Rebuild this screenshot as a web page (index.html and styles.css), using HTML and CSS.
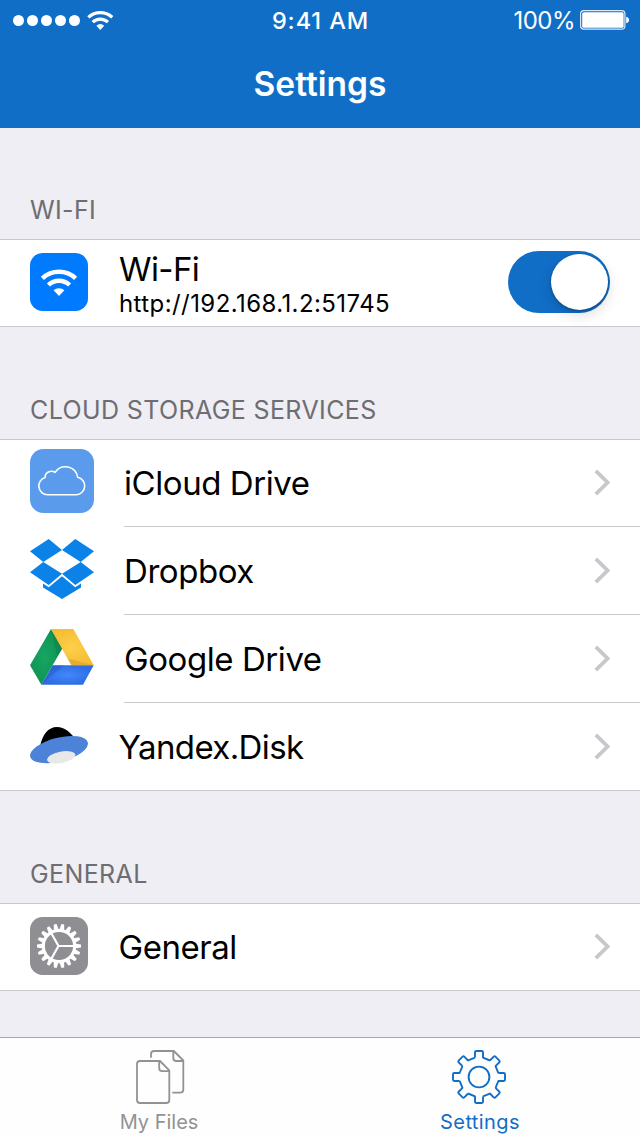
FILE: index.html
```html
<!DOCTYPE html>
<html lang="en">
<head>
<meta charset="utf-8">
<title>Settings</title>
<link rel="stylesheet" href="styles.css">
</head>
<body>
<svg width="0" height="0" class="defs" aria-hidden="true">
  <defs>
    <g id="wifi">
      <path d="M-16.6 -17.6A24.2 24.2 0 0 1 16.6 -17.6M-10.6 -11A15.3 15.3 0 0 1 10.6 -11" fill="none" stroke="#fff" stroke-width="4.5"/>
      <path d="M0 0L-5.4 -5.8A8.2 8.2 0 0 1 5.4 -5.8Z" fill="#fff"/>
    </g>
    <path id="chevron" d="M1.8 1.8L13.6 13.5L1.8 25.2" fill="none" stroke="#c7c7cc" stroke-width="3.8"/>
    <path id="cogside" d="M-4 -19.4V-24.8Q-4 -26 -2.8 -26H2.8Q4 -26 4 -24.8V-19.4L10.9 -16.5"/>
    <path id="tooth" d="M-2.5 -16L-1.4 -22H1.4L2.5 -16Z"/>
    <g id="teeth3"><use href="#tooth"/><use href="#tooth" transform="rotate(20)"/><use href="#tooth" transform="rotate(40)"/></g>
  </defs>
</svg>
<div class="screen">
  <header class="navbar">
    <div class="status">
      <div class="signal">
        <i class="dot"></i><i class="dot"></i><i class="dot"></i><i class="dot"></i><i class="dot"></i>
        <svg class="status-wifi" width="26" height="20" viewBox="0 0 26 20"><use href="#wifi" transform="translate(13.3 19) scale(.72)"/></svg>
      </div>
      <div class="clock">9:41 AM</div>
      <div class="power">
        <span class="percent">100%</span>
        <svg class="battery" width="50" height="20" viewBox="0 0 50 20"><rect x=".6" y=".6" width="44.3" height="18.6" rx="3.2" fill="none" stroke="#fff" stroke-opacity=".85" stroke-width="1.2"/><rect x="2.2" y="2.2" width="41.4" height="15.6" rx="1.6" fill="#fff"/><path d="M46.2 6.7C50 7.5 50 12.5 46.2 13.3Z" fill="#fff"/></svg>
      </div>
    </div>
    <h1 class="title">Settings</h1>
  </header>

  <main class="content">
    <h2 class="heading heading-wifi">WI-FI</h2>
    <section class="group">
      <div class="row">
        <svg class="icon icon-square" width="58" height="58" viewBox="0 0 58 58"><rect width="58" height="58" rx="12.5" fill="#007aff"/><use href="#wifi" transform="translate(29 43)"/></svg>
        <div class="labels">
          <div class="label label-wifi">Wi-Fi</div>
          <div class="address">http://192.168.1.2:51745</div>
        </div>
        <div class="switch"><div class="knob"></div></div>
      </div>
    </section>

    <h2 class="heading heading-cloud">CLOUD STORAGE SERVICES</h2>
    <section class="group">
      <div class="row row-wide">
        <svg class="icon icon-cloud" width="64" height="64" viewBox="0 0 64 64"><rect width="64" height="64" rx="13.5" fill="#5b9bec"/><path d="M17.5 45.8H46.3A8.9 8.9 0 0 0 47.6 28.2A12.3 12.3 0 0 0 25.2 23.3C20.6 20.6 15 23.6 15.1 28.4A8.9 8.9 0 0 0 17.5 45.8Z" fill="none" stroke="#fff" stroke-width="1.6"/></svg>
        <div class="cell"><span class="label">iCloud Drive</span><svg class="chevron chevron-up" width="17" height="27"><use href="#chevron"/></svg></div>
      </div>
      <div class="row row-wide">
        <svg class="icon icon-dropbox" width="64" height="60" viewBox="0 0 64 60" fill="#0a82e8"><path d="M18.7 0L32 11L13.3 23L0 12.3ZM45.3 0L64 12.3L50.7 23L32 11ZM13.3 23L32 34.7L18.7 46L0 33.3ZM50.7 23L64 33.3L45.3 46L32 34.7ZM13 44.5L18.8 48.3L32 37.2L45.2 48.3L51 44.5V48.5L32 60L13 48.5Z"/></svg>
        <div class="cell"><span class="label">Dropbox</span><svg class="chevron" width="17" height="27"><use href="#chevron"/></svg></div>
      </div>
      <div class="row row-wide">
        <svg class="icon icon-google" width="64" height="56" viewBox="0 0 64 56">
          <defs>
            <radialGradient id="green" cx=".45" cy=".5"><stop offset="0" stop-color="#17a562"/><stop offset="1" stop-color="#109454"/></radialGradient>
            <radialGradient id="yellow"><stop offset="0" stop-color="#ffcf4c"/><stop offset="1" stop-color="#f5be35"/></radialGradient>
            <radialGradient id="blue"><stop offset="0" stop-color="#4388fa"/><stop offset="1" stop-color="#2e6de4"/></radialGradient>
          </defs>
          <path d="M21 0L32.3 19.5L11.3 55.7L0 36.3Z" fill="url(#green)"/><path d="M21 0H43.3L63.7 36.3H41.3Z" fill="url(#yellow)"/><path d="M22.7 36.3H63.7L53 55.7H11.3Z" fill="url(#blue)"/>
          <path d="M21 0L32.3 19.5L27 27Z" fill="#0a6d3c" opacity=".25"/><path d="M38 29.5L63.7 36.3H41.3Z" fill="#b9812a" opacity=".3"/><path d="M22.7 36.3H34L11.3 55.7Z" fill="#1b4da8" opacity=".3"/>
        </svg>
        <div class="cell"><span class="label">Google Drive</span><svg class="chevron" width="17" height="27"><use href="#chevron"/></svg></div>
      </div>
      <div class="row row-wide">
        <svg class="icon icon-yandex" width="64" height="38" viewBox="0 0 64 38"><path d="M10.2 18.5C12.5 8 18 0 27 0C35 0 39.5 5.5 44 10Z" fill="#000"/><ellipse cx="29" cy="22.6" rx="29.7" ry="11.9" transform="rotate(-14 29 22.6)" fill="#4c82d8"/><ellipse cx="31.2" cy="30.3" rx="14.4" ry="5.7" transform="rotate(-11 31.2 30.3)" fill="#e8e8e8"/></svg>
        <div class="cell"><span class="label label-yandex">Yandex.Disk</span><svg class="chevron" width="17" height="27"><use href="#chevron"/></svg></div>
      </div>
    </section>

    <h2 class="heading heading-general">GENERAL</h2>
    <section class="group">
      <div class="row">
        <svg class="icon icon-square" width="58" height="58" viewBox="0 0 58 58"><rect width="58" height="58" rx="12.5" fill="#8e8e93"/>
          <g transform="translate(29 29) rotate(90)" fill="#fff"><use href="#teeth3"/><use href="#teeth3" transform="rotate(60)"/><use href="#teeth3" transform="rotate(120)"/><use href="#teeth3" transform="rotate(180)"/><use href="#teeth3" transform="rotate(240)"/><use href="#teeth3" transform="rotate(300)"/></g>
          <g transform="translate(29 29)" fill="none" stroke="#fff"><circle r="15.6" stroke-width="3"/><path d="M-.5 0H15M-.5 0L-7.8 -13M-.5 0L-7.8 13" stroke-width="2.2"/></g></svg>
        <div class="cell"><span class="label label-general">General</span><svg class="chevron chevron-up" width="17" height="27"><use href="#chevron"/></svg></div>
      </div>
    </section>
  </main>

  <nav class="tabbar">
    <div class="tab">
      <svg class="files" width="50" height="56" viewBox="0 0 50 56" fill="none" stroke="#929292" stroke-width="1.8" stroke-linejoin="round"><path d="M25 12H5Q2 12 2 15V51Q2 54 5 54H31.3Q34.3 54 34.3 51V21.3L25 12H24.2V19.3Q24.2 22.2 27.2 22.2H34.3M16 8.7V5Q16 2 19 2H38.8L48.3 11.5V40.5Q48.3 43.6 45.3 43.6H37.3M38.3 2V9Q38.3 12 41.3 12H48.3"/></svg>
      <span class="tab-label">My Files</span>
    </div>
    <div class="tab tab-active">
      <svg width="56" height="56" viewBox="0 0 56 56"><g transform="translate(28 28)" fill="none" stroke="#116ec7" stroke-width="1.9" stroke-linejoin="round"><circle r="10.4"/><use href="#cogside"/><use href="#cogside" transform="rotate(45)"/><use href="#cogside" transform="rotate(90)"/><use href="#cogside" transform="rotate(135)"/><use href="#cogside" transform="rotate(180)"/><use href="#cogside" transform="rotate(225)"/><use href="#cogside" transform="rotate(270)"/><use href="#cogside" transform="rotate(315)"/></g></svg>
      <span class="tab-label tab-settings">Settings</span>
    </div>
  </nav>
</div>
</body>
</html>
```
FILE: styles.css
```css
* { box-sizing: border-box; }
body { margin: 0; font-family: Inter, "Liberation Sans", sans-serif; color: #000; }
.defs { display: block; }
.screen { width: 640px; height: 1136px; display: flex; flex-direction: column; background: #efeef4; overflow: hidden; white-space: nowrap; }
.navbar { height: 128px; background: #116ec7; color: #fff; }
.status { height: 40px; display: grid; grid-template-columns: 1fr auto 1fr; align-items: center; padding: 0 10px 0 13px; }
.signal { display: flex; align-items: center; gap: 3px; margin-bottom: 1px; }
.dot { width: 11px; height: 11px; border-radius: 50%; background: #fff; }
.status-wifi { margin-left: 4px; }
.clock { font-size: 23.5px; font-weight: 500; letter-spacing: 0.9px; line-height: 42px; margin-left: -2px; }
.power { display: flex; align-items: center; justify-content: flex-end; gap: 5px; }
.percent { font-size: 24px; line-height: 42px; letter-spacing: -0.5px; }
.battery { margin-bottom: 2px; }
.title { margin: 0; font-size: 33.5px; line-height: 89px; font-weight: 580; text-align: center; letter-spacing: 0; }

.content { flex: 1; }
.heading { margin: 0; padding: 0 30px 14px; display: flex; align-items: flex-end; font-size: 25px; line-height: 30px; font-weight: 400; color: #6d6d72; letter-spacing: 0.38px; }
.heading-wifi { height: 111px; }
.heading-cloud, .heading-general { height: 112px; }
.group { background: #fff; border-top: 1px solid #c8c7cc; border-bottom: 1px solid #c8c7cc; }
.row { height: 86px; display: flex; align-items: center; padding-left: 30px; }
.row + .row { height: 88px; }
.icon { flex: none; margin-right: 31px; }
.icon-square { margin-top: -2px; }
.row-wide .icon { margin-right: 30px; }
.icon-cloud { margin-top: -4px; }
.icon-dropbox { margin-top: -3px; }
.icon-google { margin-top: -3px; }
.cell { flex: 1; align-self: stretch; display: flex; align-items: center; justify-content: space-between; padding: 0 29px 0 0; }
.row + .row .cell { border-top: 1px solid #c8c7cc; }
.chevron-up { margin-bottom: 2px; }
.label { font-size: 33px; line-height: 40px; letter-spacing: -0.43px; }
.label-wifi { line-height: 38px; letter-spacing: -0.6px; }
.label-yandex { margin-left: -5.5px; letter-spacing: -0.6px; }
.label-general { margin-left: -0.5px; letter-spacing: -0.45px; }
.labels { flex: 1; padding-top: 4px; }
.address { font-size: 24px; line-height: 32px; letter-spacing: 0.42px; }
.switch { width: 102px; height: 62px; margin: 0 30px 2px 0; border-radius: 31px; background: #116ec7; padding: 3px 2px; display: flex; justify-content: flex-end; }
.knob { width: 57px; height: 56px; border-radius: 50%; background: #fff; box-shadow: 0 5px 14px rgba(0, 0, 0, .15), 0 1px 3px rgba(0, 0, 0, .3); }

.tabbar { height: 99px; display: grid; grid-template-columns: 1fr 1fr; background: #fefefe; border-top: 1px solid #a7a7aa; }
.tab { display: flex; flex-direction: column; align-items: center; padding: 11px 2px 0 0; color: #929292; }
.tab-active { color: #116ec7; }
.files { margin-left: 2px; }
.tab-label { font-size: 20px; line-height: 24px; margin-top: 5px; }
.tab-settings { letter-spacing: 0.4px; margin-left: 2px; }
```
